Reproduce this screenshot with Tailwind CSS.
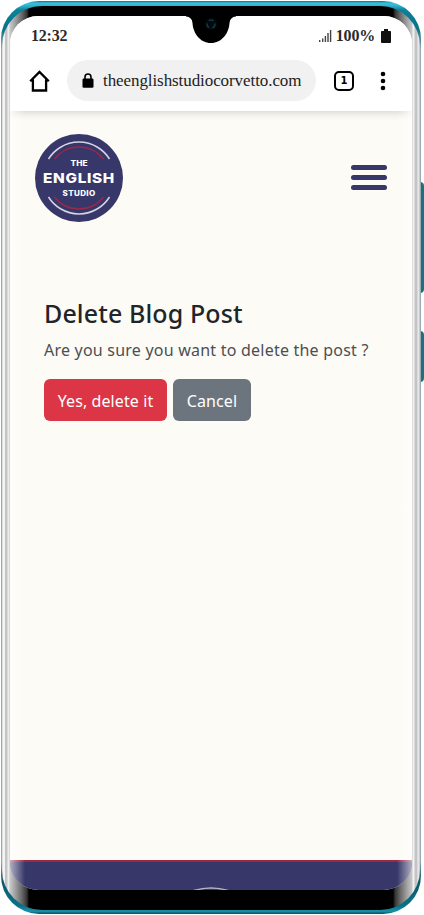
<!DOCTYPE html>
<html lang="en">
<head>
<meta charset="utf-8">
<title>Delete Blog Post</title>
<script src="https://cdn.jsdelivr.net/npm/@tailwindcss/browser@4"></script>
</head>
<body class="bg-white">
<div class="relative w-[424px] h-[915px] overflow-hidden pl-px pt-px">
  <!-- side buttons -->
  <div class="absolute left-[420px] top-[182px] w-1 h-[111px] bg-[#1d7082] rounded-r-sm"></div>
  <div class="absolute left-[420px] top-[331px] w-1 h-[51px] bg-[#1d7082] rounded-r-sm"></div>
  <!-- phone body -->
  <div class="relative w-[420px] h-[913px] rounded-[38px] px-px pt-[5px] pb-[4px] bg-[linear-gradient(to_bottom,#176b7d_0px,#35c0dc_2px,#35b9d5_4px,#0b8199_9px,#087287_28px,#9aaaae_48px,#9aaaae_860px,#0b5968_880px,#087287_905px,#168ca5_909px,#168ca5_911px,#0b5968_912px)]">
    <div class="h-full rounded-[40px] px-[8px] pt-[10px] pb-[20px] bg-[linear-gradient(to_right,#bfc3c5_0px,#f7f7f7_1px,#f2f2f2_2.5px,#c4c3c5_3.5px,#c4c3c5_5px,#f2f2f2_6px,#e6e6e6_7px,#c8c8ca_8px,#aaa_12px,#666_20px,#333_25px,#000_27px,#000_391px,#333_393px,#666_398px,#aaa_406px,#c8c8ca_410px,#f2f2f2_411px,#f2f2f2_412px,#c4c3c5_413px,#c4c3c5_415px,#f2f2f2_416px,#bfc3c5_418px)]">
      <!-- screen -->
      <div class="relative h-full flex flex-col overflow-hidden rounded-[28px] bg-[#fdfbf5]">
        <header class="relative z-10 h-[95px] shrink-0 bg-white shadow-[0_1px_9px_rgba(0,0,0,0.18)]">
          <div class="flex justify-between items-center h-[38px] pl-[21px] pr-[21px] font-['Liberation_Serif',serif] font-bold text-[16px] text-[#2b2b2b]">
            <span class="tracking-[-0.2px] pt-px">12:32</span>
            <span class="flex items-center pt-px">
              <svg class="mr-[4px]" width="13" height="14" viewBox="0 0 13 14" fill="#444"><path d="M0 11h1.4v2H0zM3 9.500h1.400V13H3zM5.700 7h1.400v6H5.700zM8.300 4h1.400v9H8.300zM10.900 1h1.400v12h-1.400z"/></svg>
              <span class="tracking-[-0.2px]">100%</span>
              <svg class="ml-[6px]" width="10" height="14" viewBox="0 0 10 14" fill="#111"><path d="M3 0h4v2h2.200q.8 0 .8.800V13.200q0 .8-.8.800H.8Q0 14 0 13.200V2.800Q0 2 .8 2H3z"/></svg>
            </span>
          </div>
          <div class="flex items-center h-[53px] pl-[19px]">
            <svg class="shrink-0" width="21" height="22" viewBox="0 0 21 22" fill="none" stroke="#000" stroke-width="2.300"><path d="M1.200 11.300L10.500 2l9.300 9.300M3.900 9.500V20.500H17.100V9.500"/></svg>
            <div class="ml-[17px] w-[249px] h-[41px] rounded-full bg-[#f1f1f1] flex items-center pl-[15px]">
              <svg class="shrink-0" width="12" height="15" viewBox="0 0 12 15"><path d="M3 7V4a3 3 0 0 1 6 0V7" fill="none" stroke="#000" stroke-width="1.600"/><rect x=".5" y="5.500" width="11" height="9.300" rx="1.200"/></svg>
              <span class="ml-[9px] whitespace-nowrap font-['Liberation_Serif',serif] text-[17px] text-[#222] tracking-[-0.08px]">theenglishstudiocorvetto.com</span>
            </div>
            <div class="ml-[18px] w-[20px] h-[20px] rounded-[5px] border-2 border-black flex items-center justify-center font-['DejaVu_Sans',sans-serif] font-bold text-[10px] leading-none">1</div>
            <svg class="ml-[26px]" width="6" height="20" viewBox="0 0 6 20"><circle cx="3" cy="3" r="2.300"/><circle cx="3" cy="10" r="2.300"/><circle cx="3" cy="17" r="2.300"/></svg>
          </div>
        </header>
        <nav class="flex items-center justify-between h-[133px] shrink-0 pl-[24px] pr-[25px]">
          <svg width="90" height="90" viewBox="0 0 90 90">
            <circle cx="45" cy="45" r="44" fill="#37376a"/>
            <g fill="none" stroke-width="1.500"><g stroke="#d5d4e4"><path d="M14.500 26A36 36 0 0 1 75.500 26M14.500 64A36 36 0 0 0 75.500 64"/></g><g stroke="#9a2849"><path d="M20.500 26A31 31 0 0 1 69.500 26M20.500 64A31 31 0 0 0 69.500 64"/></g></g>
            <g fill="#fff" font-family="Inter, sans-serif" font-weight="800" text-anchor="middle"><text x="45" y="33" font-size="7" textLength="17" lengthAdjust="spacingAndGlyphs">THE</text><text x="45" y="49.500" font-size="13.500" letter-spacing=".6" textLength="72" lengthAdjust="spacingAndGlyphs">ENGLISH</text><text x="45" y="62.500" font-size="7" letter-spacing=".3" textLength="33" lengthAdjust="spacingAndGlyphs">STUDIO</text></g>
          </svg>
          <div class="flex flex-col gap-[5px] w-[36px]">
            <div class="h-[5px] rounded-full bg-[#37376a]"></div>
            <div class="h-[5px] rounded-full bg-[#37376a]"></div>
            <div class="h-[5px] rounded-full bg-[#37376a]"></div>
          </div>
        </nav>
        <main class="flex-1 px-[34px] pt-[52px] font-['Noto_Sans',sans-serif] whitespace-nowrap">
          <h1 class="text-[25px] leading-[34px] font-medium text-[#212529] tracking-[0.12px]">Delete Blog Post</h1>
          <p class="mt-[8px] text-[16px] leading-[24px] text-[#4b4f54] tracking-[0.22px]">Are you sure you want to delete the post ?</p>
          <div class="mt-[17px] flex gap-[6px] text-[16px] tracking-[0.1px] text-white">
            <button class="w-[123px] h-[42px] pt-[2px] rounded-[6px] bg-[#dc3545]">Yes, delete it</button>
            <button class="w-[78px] h-[42px] pt-[2px] rounded-[6px] bg-[#6c757d]">Cancel</button>
          </div>
        </main>
        <footer class="h-[30px] shrink-0 border-t-2 border-[#a22644] bg-[#37376a] flex justify-center items-end overflow-hidden">
          <svg width="36" height="3" viewBox="0 0 36 3" fill="none" stroke="#b5b4ca" stroke-width="1.500"><path d="M1 3.500Q18-1.500 35 3.500"/></svg>
        </footer>
        <div class="absolute z-20 inset-y-0 left-0 w-[15px] bg-linear-to-r from-white/60 to-white/0"></div>
        <div class="absolute z-20 inset-y-0 right-0 w-[15px] bg-linear-to-l from-white/60 to-white/0"></div>
      </div>
    </div>
    <!-- camera notch -->
    <svg class="absolute z-30 left-[182px] top-[14px]" width="56" height="30" viewBox="0 0 56 30"><path d="M3 0V1.500Q9 2 9.500 8C10 18 17 28 28 28S46 18 46.500 8Q47 2 53 1.500V0z"/><circle cx="28" cy="9" r="6" fill="#05090c"/><circle cx="28" cy="9" r="4" fill="none" stroke="#0b3a4a" stroke-width="1.500" stroke-dasharray="5 3"/></svg>
  </div>
</div>
</body>
</html>
